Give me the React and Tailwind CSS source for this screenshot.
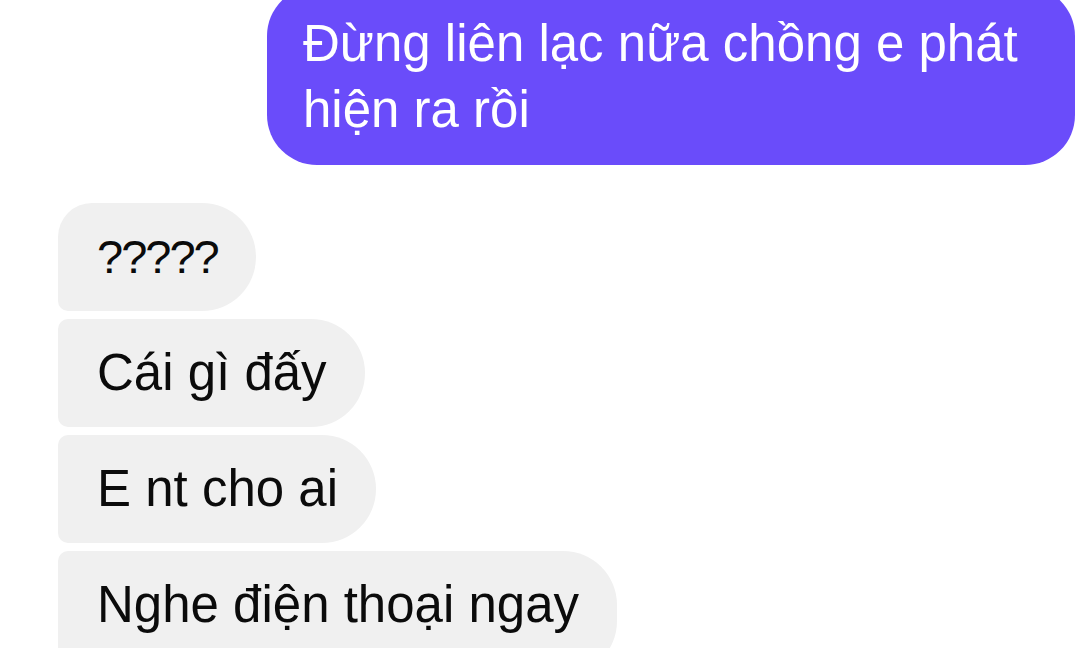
import React from 'react';

const theirs = [
  { text: '?????', shape: 'rounded-tl-[34px] rounded-bl-[10px] text-[47px] tracking-[-2px]' },
  { text: 'Cái gì đấy', shape: 'rounded-tl-[10px] rounded-bl-[10px] text-[51px]' },
  { text: 'E nt cho ai', shape: 'rounded-tl-[10px] rounded-bl-[10px] text-[51px]' },
  { text: 'Nghe điện thoại ngay', shape: 'rounded-tl-[10px] rounded-bl-[10px] text-[51px] pb-[40px]' },
];

export default function App() {
  return (
    <div
      className="w-full h-[648px] overflow-hidden bg-white"
      style={{ fontFamily: '"Liberation Sans", Arial, sans-serif' }}
    >
      {/* Sent message */}
      <div className="flex justify-end pr-[5px]">
        <div className="w-[808px] -mt-[14px] rounded-[50px] bg-[#6a4cfa] pl-[36px] pr-[40px] pt-[25px] pb-[22px] text-[51px] leading-[66px] text-white">
          Đừng liên lạc nữa chồng e phát hiện ra rồi
        </div>
      </div>

      {/* Received messages */}
      <div className="flex flex-col items-start gap-2 pl-[58px] mt-[38px]">
        {theirs.map((m, i) => (
          <div
            key={i}
            className={`bg-[#f0f0f0] rounded-r-[54px] pl-[39px] pr-[38px] pt-[24px] pb-[24px] leading-[60px] text-[#0b0b0b] whitespace-nowrap ${m.shape}`}
          >
            {m.text}
          </div>
        ))}
      </div>
    </div>
  );
}
